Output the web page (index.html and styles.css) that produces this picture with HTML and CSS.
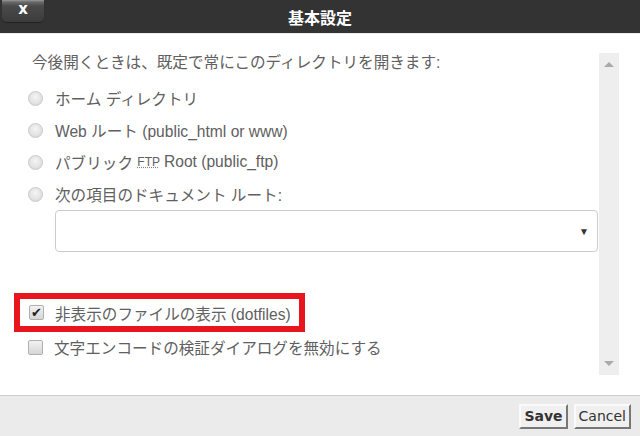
FILE: index.html
```html
<!DOCTYPE html>
<html lang="ja">
<head>
	<meta charset="UTF-8">
	<title>基本設定</title>
	<link rel="stylesheet" href="styles.css">
</head>
<body>
	<div class="dialog">
		<!-- タイトルバー -->
		<div class="titlebar">
			<span class="close">x</span>
			<h1 class="title">基本設定</h1>
		</div>

		<div class="body">
			<div class="content">
				<p class="lead">今後開くときは、既定で常にこのディレクトリを開きます:</p>

				<div class="option"><span class="radio"></span>ホーム ディレクトリ</div>
				<div class="option"><span class="radio"></span>Web ルート (public_html or www)</div>
				<div class="option"><span class="radio"></span>パブリック&nbsp;<abbr class="abbr">FTP</abbr> Root (public_ftp)</div>
				<div class="option"><span class="radio"></span>次の項目のドキュメント ルート:</div>

				<div class="select"><span class="caret">&#9660;</span></div>

				<div class="mark">
					<div class="option check-row"><span class="check">&#10004;</span>非表示のファイルの表示 (dotfiles)</div>
				</div>
				<div class="option check-row"><span class="check"></span>文字エンコードの検証ダイアログを無効にする</div>
			</div>

			<!-- スクロールバー -->
			<div class="scrollbar">
				<span class="arrow up"></span>
				<span class="arrow down"></span>
			</div>
		</div>

		<div class="footer">
			<button class="btn btn-save">Save</button>
			<button class="btn">Cancel</button>
		</div>
	</div>
</body>
</html>
```

FILE: styles.css
```css
body {
	margin: 0;
	font-family: "Liberation Sans", "Noto Sans CJK JP", sans-serif;
	color: #606060;
}
.dialog {
	width: 640px;
	height: 436px;
	display: flex;
	flex-direction: column;
	background: #fff;
}

/* タイトルバー */
.titlebar {
	height: 33px;
	background: #333;
	border-bottom: 1px solid #eee;
	position: relative;
	display: flex;
	align-items: center;
	justify-content: center;
}
.title {
	margin: 0;
	color: #fff;
	font-size: 16px;
	font-weight: bold;
	font-family: "Noto Sans CJK JP", sans-serif;
}
.close {
	position: absolute;
	left: 2px;
	top: 0;
	width: 42px;
	height: 22px;
	border-radius: 0 0 5px 5px;
	background: linear-gradient(#9a9a9a 0, #6a6a6a 2px, #4a4a4a 6px, #3c3c3c 100%);
	box-shadow: 0 1px 1px #222;
	color: #fff;
	font: bold 15px "DejaVu Sans", sans-serif;
	line-height: 19px;
	text-align: center;
}

/* 本文 */
.body {
	flex: 1;
	display: flex;
	padding: 19px 21px 0 0;
	border-bottom: 1px solid #ccc;
}
.content {
	flex: 1;
	padding-left: 28px;
}
.lead {
	margin: 0 0 9px 4px;
	line-height: 20px;
	font-size: 15.6px;
}
.option {
	display: flex;
	align-items: center;
	height: 32px;
	font-size: 15.6px;
}
.radio {
	width: 13px;
	height: 13px;
	border: 1px solid #c8c8c8;
	border-radius: 50%;
	background: radial-gradient(circle at 50% 40%, #f4f4f4, #d6d6d6);
	margin-right: 12px;
}
.abbr {
	font-size: 12px;
	text-decoration: underline dotted #888;
	margin-right: 4px;
}
.select {
	margin: 0 1px 0 27px;
	height: 40px;
	border: 1px solid #ccc;
	border-radius: 4px;
	display: flex;
	align-items: center;
	justify-content: flex-end;
	padding-right: 8px;
}
.caret {
	font-size: 10px;
	color: #333;
}
.mark {
	display: inline-block;
	margin: 41px 0 0 -14px;
	border: 6px solid #e8141e;
	padding: 0 0 0 9px;
	width: 270px;
}
.mark .check-row {
	height: 27px;
}
.check-row {
	height: 30px;
}
.check {
	width: 13px;
	height: 13px;
	border: 1px solid #b0b0b0;
	border-radius: 2px;
	background: linear-gradient(#f2f2f2, #d6d6d6);
	margin-right: 11px;
	font-size: 13px;
	font-family: "DejaVu Sans", sans-serif;
	line-height: 13px;
	text-align: center;
	color: #222;
}

/* スクロールバー */
.scrollbar {
	width: 20px;
	height: 322px;
	background: #eee;
	position: relative;
}
.arrow {
	position: absolute;
	left: 5px;
	width: 0;
	height: 0;
	border-left: 5px solid transparent;
	border-right: 5px solid transparent;
}
.up {
	top: 9px;
	border-bottom: 5px solid #aaa;
}
.down {
	bottom: 9px;
	border-top: 5px solid #aaa;
}

/* フッター */
.footer {
	height: 40px;
	background: #ebebeb;
	display: flex;
	justify-content: flex-end;
	align-items: center;
	gap: 6px;
	padding-right: 9px;
}
.btn {
	height: 25px;
	padding: 0 3px;
	background: #f0f0f0;
	border: 2px solid;
	border-color: #fafafa #777 #777 #fafafa;
	font: 14px "DejaVu Sans", sans-serif;
	color: #333;
}
.btn-save {
	font-weight: bold;
}
```
